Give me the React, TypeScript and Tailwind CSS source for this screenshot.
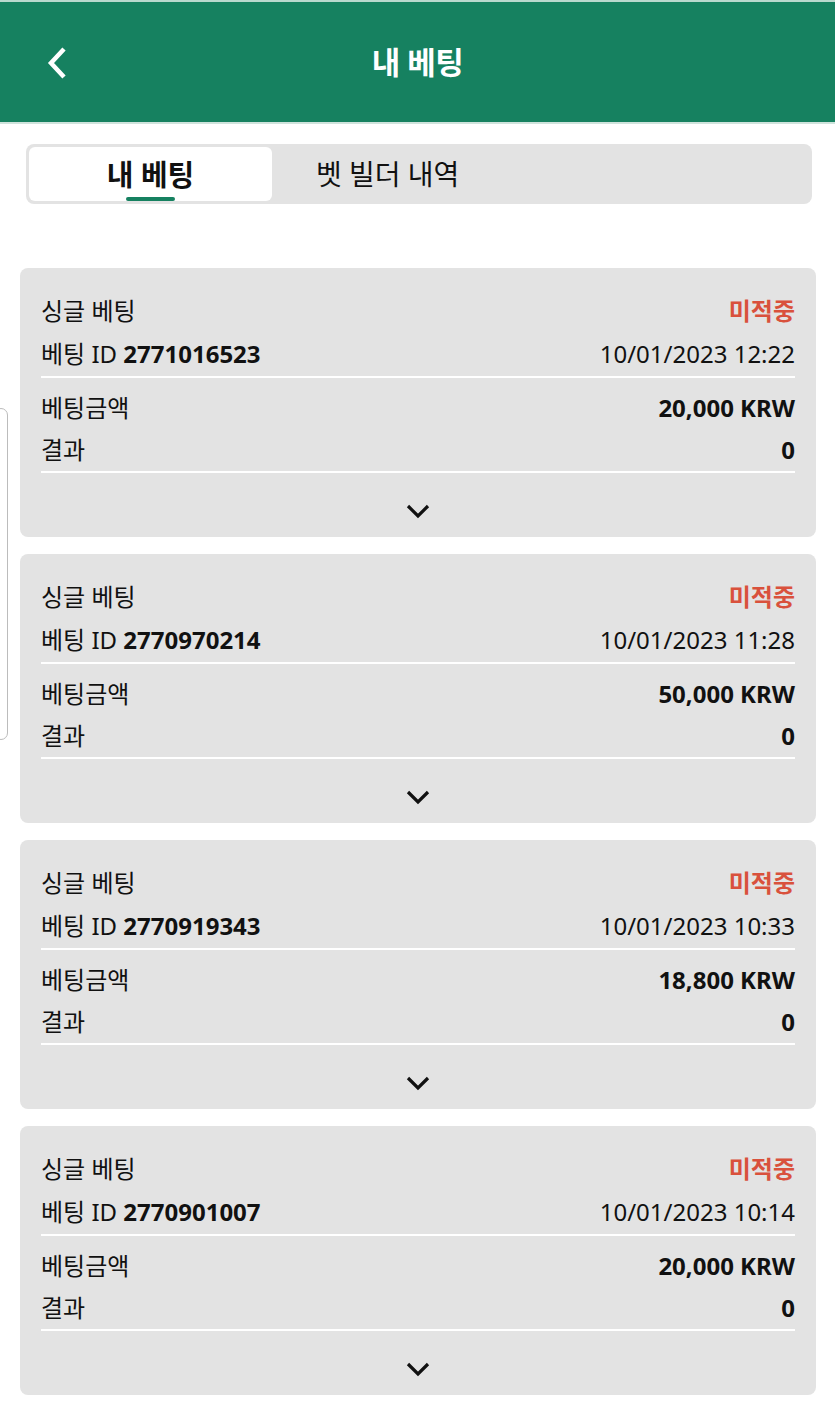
import React from "react";

const bets = [
  { id: "2771016523", date: "10/01/2023 12:22", amount: "20,000 KRW" },
  { id: "2770970214", date: "10/01/2023 11:28", amount: "50,000 KRW" },
  { id: "2770919343", date: "10/01/2023 10:33", amount: "18,800 KRW" },
  { id: "2770901007", date: "10/01/2023 10:14", amount: "20,000 KRW" },
];

function BetCard({ id, date, amount }: { id: string; date: string; amount: string }) {
  return (
    <div className="bg-[#e3e3e3] rounded-[8px] px-[21px] pt-[22px] h-[269px] flex flex-col">
      <div className="flex justify-between items-center h-[42px]">
        <span>싱글 베팅</span>
        <span className="text-[#d9513c] font-bold">미적중</span>
      </div>
      <div className="flex justify-between items-center h-[46px] border-b-2 border-white">
        <span>
          베팅 ID <b className="font-bold">{id}</b>
        </span>
        <span>{date}</span>
      </div>
      <div className="flex justify-between items-center h-[50px] pt-[10px]">
        <span>베팅금액</span>
        <span className="font-bold">{amount}</span>
      </div>
      <div className="flex justify-between items-center h-[45px] border-b-2 border-white">
        <span>결과</span>
        <span className="font-bold">0</span>
      </div>
      <div className="flex justify-center pt-[30px]">
        <svg width="26" height="16" viewBox="0 0 26 16" fill="none">
          <path d="M3 3l10 10 10-10" stroke="#111" strokeWidth="3.2" />
        </svg>
      </div>
    </div>
  );
}

export default function App() {
  return (
    <div className="relative w-[835px] min-h-[1408px] bg-white text-[#111] text-[24px] font-['Noto_Sans','Noto_Sans_CJK_KR',sans-serif]">
      <div className="h-[2px] bg-[#b9d9ce]" />
      <header className="h-[122px] bg-[#168160] flex items-center relative border-b-2 border-[#cfe3dc]">
        <svg className="absolute left-[44px] top-[43px]" width="26" height="36" viewBox="0 0 26 36" fill="none">
          <path d="M20 4L7 18l13 14" stroke="white" strokeWidth="4.5" />
        </svg>
        <h1 className="w-full text-center text-white font-bold text-[31px] tracking-[-0.5px]">내 베팅</h1>
      </header>

      <div className="pl-[26px] pr-[23px] pt-[20px]">
        <div className="bg-[#e3e3e3] rounded-[8px] h-[60px] p-[3px] flex">
          <div className="w-[243px] bg-white rounded-[6px] flex flex-col items-center justify-center relative">
            <span className="font-bold text-[29px] leading-none">내 베팅</span>
            <div className="absolute bottom-0 w-[49px] h-[4px] rounded-full bg-[#168160]" />
          </div>
          <div className="pl-[44px] flex items-center text-[28px]">벳 빌더 내역</div>
        </div>
      </div>

      <div className="pl-[20px] pr-[19px] pt-[64px] flex flex-col gap-[17px]">
        {bets.map((b) => (
          <BetCard key={b.id} {...b} />
        ))}
      </div>

      <div className="absolute left-[-6px] top-[408px] w-[14px] h-[332px] border border-[#bcbcbc] rounded-[8px]" />
    </div>
  );
}
